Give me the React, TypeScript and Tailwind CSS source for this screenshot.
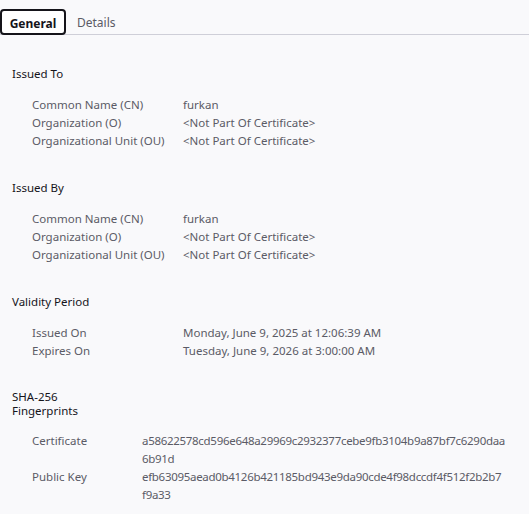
const issued = [
  ["Common Name (CN)", "furkan"],
  ["Organization (O)", "<Not Part Of Certificate>"],
  ["Organizational Unit (OU)", "<Not Part Of Certificate>"],
];

const Section = ({
  title,
  rows,
  valueCol = "w-[151px]",
  titleClass = "leading-[13px] py-[7px]",
}: {
  title: React.ReactNode;
  rows: React.ReactNode[][];
  valueCol?: string;
  titleClass?: string;
}) => (
  <div className="mb-[24px]">
    <h3 className={`text-[11.5px] text-[#15141a] ${titleClass}`}>{title}</h3>
    <div className="mt-[9px] pl-[20px]">
      {rows.map(([k, v], i) => (
        <div key={i} className="flex text-[11.5px] leading-[18px] text-[#5b5b66]">
          <div className={`${valueCol} shrink-0`}>{k}</div>
          <div>{v}</div>
        </div>
      ))}
    </div>
  </div>
);

const Hex = ({ a, b }: { a: string; b: string }) => (
  <div className="tracking-[-0.3px]">
    <div>{a}</div>
    <div>{b}</div>
  </div>
);

export default function App() {
  return (
    <div
      className="min-h-[514px] w-[529px] bg-[#f9f9fb] overflow-hidden"
      style={{ fontFamily: '"Segoe UI", "Noto Sans", sans-serif' }}
    >
      <div className="flex items-end pt-[9px] border-b border-[#cfcfd8] h-[35px]">
        <div className="h-[26px] w-[66px] border-2 border-[#15141a] rounded-[4px] bg-white flex items-center justify-center pt-[3px] text-[12px] font-bold text-[#15141a] -mb-px">
          General
        </div>
        <div className="ml-[11px] h-[26px] flex items-center pt-[3px] text-[12px] text-[#5b5b66]">
          Details
        </div>
      </div>
      <div className="pl-[12px] pt-[25px]">
        <Section title="Issued To" rows={issued} />
        <Section title="Issued By" rows={issued} />
        <Section
          title="Validity Period"
          rows={[
            ["Issued On", "Monday, June 9, 2025 at 12:06:39 AM"],
            ["Expires On", "Tuesday, June 9, 2026 at 3:00:00 AM"],
          ]}
        />
        <Section
          title={
            <>
              SHA-256
              <br />
              Fingerprints
            </>
          }
          titleClass="leading-[14px] pt-[6px] pb-[5px]"
          valueCol="w-[110px]"
          rows={[
            [
              "Certificate",
              <Hex a="a58622578cd596e648a29969c2932377cebe9fb3104b9a87bf7c6290daa" b="6b91d" />,
            ],
            [
              "Public Key",
              <Hex a="efb63095aead0b4126b421185bd943e9da90cde4f98dccdf4f512f2b2b7" b="f9a33" />,
            ],
          ]}
        />
      </div>
    </div>
  );
}
